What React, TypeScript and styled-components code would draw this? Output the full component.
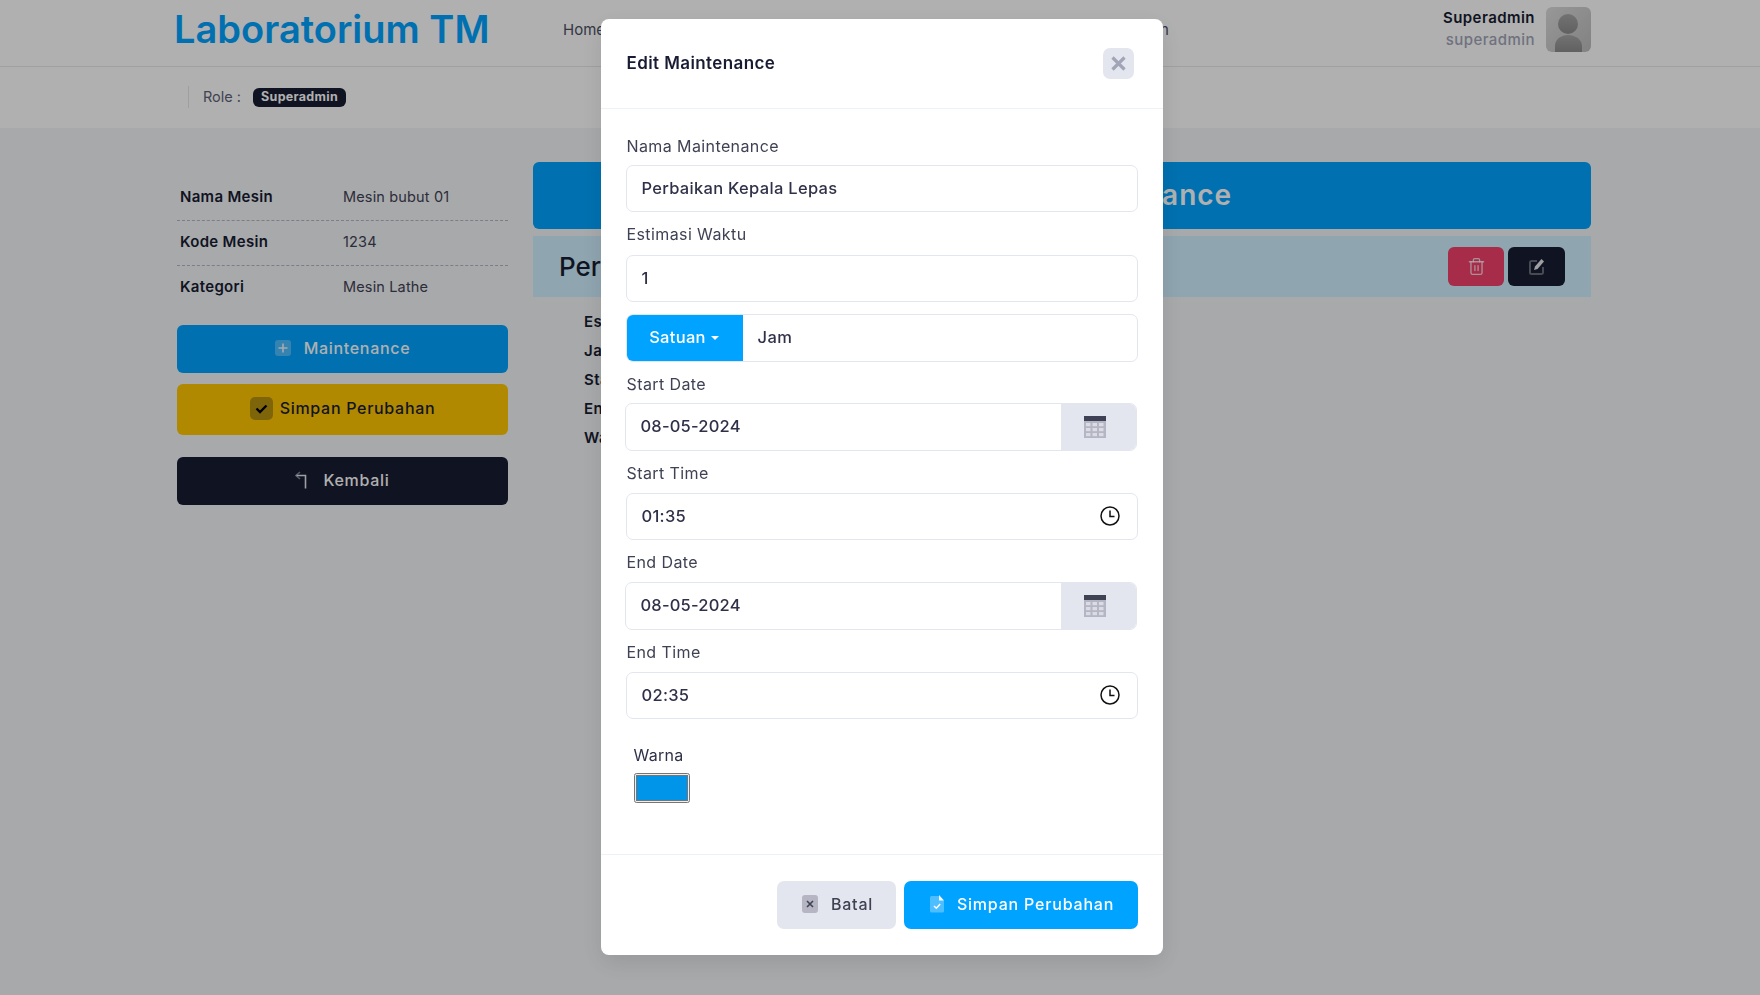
import styled, { createGlobalStyle } from "styled-components";
import { Trash2 } from "lucide-react";

const GlobalStyle = createGlobalStyle`
  * { box-sizing: border-box; }
  html, body { margin: 0; padding: 0; height: 100%; }
  body {
    background: #f3f5f8;
    font-family: "Inter", "Noto Sans", sans-serif;
    color: #181c32;
    overflow: hidden;
  }
`;

const Page = styled.div`
  height: 995px;
`;

const Header = styled.header`
  height: 67px;
  background: #fff;
  border-bottom: 1px solid #e8e8e8;
  display: flex;
  align-items: center;
  padding: 0 169px 7px 174px;
`;

const Logo = styled.h1`
  margin: 0;
  width: 389px;
  padding-bottom: 2px;
  font-size: 38px;
  font-weight: 600;
  color: #00a3ff;
`;

const Nav = styled.nav`
  width: 606px;
  display: flex;
  justify-content: space-between;
  font-size: 15px;
  color: #4b5066;
`;

const UserBox = styled.div`
  margin-left: auto;
  display: flex;
  align-items: center;
  gap: 11px;
`;

const UserText = styled.div`
  text-align: right;
  font-size: 15px;
  line-height: 22px;
  font-weight: 600;
  letter-spacing: 0.45px;
  padding-bottom: 2px;
`;

const UserSub = styled.div`
  font-weight: 500;
  color: #a1a5b7;
`;

const Avatar = styled.div`
  width: 45px;
  height: 45px;
  border-radius: 6px;
  overflow: hidden;
  svg { display: block; }
`;

const SubHeader = styled.div`
  height: 61px;
  background: #fff;
  display: flex;
  align-items: center;
  padding: 0 0 1px 188px;
`;

const RoleBox = styled.div`
  height: 22px;
  border-left: 1px solid #e4e6ef;
  padding-left: 14px;
  display: flex;
  align-items: center;
  gap: 12px;
  font-size: 14.5px;
  color: #5e6278;
`;

const RoleText = styled.span`
  padding-bottom: 2px;
`;

const Badge = styled.span`
  width: 93px;
  height: 19px;
  border-radius: 6px;
  background: #181c32;
  color: #fff;
  font-size: 12.5px;
  font-weight: 700;
  letter-spacing: 0.3px;
  padding-bottom: 1px;
  display: flex;
  align-items: center;
  justify-content: center;
`;

const Content = styled.main`
  display: flex;
  gap: 25px;
  padding: 34px 169px 0 177px;
`;

const LeftCol = styled.aside`
  width: 331px;
  padding-top: 14px;
`;

const InfoRow = styled.div<{ $last?: boolean }>`
  height: 45px;
  display: flex;
  align-items: center;
  padding: 0 0 ${(p) => (p.$last ? 4 : 3)}px 3px;
  font-size: 15px;
  border-bottom: ${(p) => (p.$last ? "none" : "1px dashed #b5b5c3")};
`;

const InfoLabel = styled.span`
  width: 163px;
  font-weight: 600;
  letter-spacing: 0.3px;
`;

const InfoValue = styled.span`
  font-size: 14.5px;
  letter-spacing: 0.15px;
  color: #3f4254;
`;

const SideButton = styled.button<{ $bg: string; $fg: string; $h: number; $mt: number; $gap: number }>`
  width: 100%;
  height: ${(p) => p.$h}px;
  margin-top: ${(p) => p.$mt}px;
  border: 0;
  border-radius: 6px;
  background: ${(p) => p.$bg};
  color: ${(p) => p.$fg};
  font-family: inherit;
  font-size: 16px;
  font-weight: 500;
  letter-spacing: 0.7px;
  padding: 0 0 3px;
  display: flex;
  align-items: center;
  justify-content: center;
  gap: ${(p) => p.$gap}px;
`;

const RightCol = styled.section`
  flex: 1;
`;

const Banner = styled.div`
  height: 67px;
  border-radius: 6px;
  background: #00a3ff;
  color: #fff;
  font-size: 28px;
  font-weight: 600;
  letter-spacing: 1px;
  display: flex;
  align-items: center;
  justify-content: center;
  padding: 0 0 2px 62px;
`;

const PlanBar = styled.div`
  height: 61px;
  margin-top: 7px;
  background: #cfeffe;
  display: flex;
  align-items: center;
  padding: 0 26px;
  font-size: 26px;
  font-weight: 500;
`;

const PlanActions = styled.div`
  margin-left: auto;
  display: flex;
  gap: 4px;
`;

const SquareButton = styled.button<{ $bg: string; $w: number }>`
  width: ${(p) => p.$w}px;
  height: 39px;
  border: 0;
  border-radius: 6px;
  background: ${(p) => p.$bg};
  display: flex;
  align-items: center;
  justify-content: center;
  padding: 0;
  color: rgba(255, 255, 255, 0.75);
`;

const DetailList = styled.div`
  padding: 10px 0 0 51px;
  font-size: 15px;
  font-weight: 600;
  letter-spacing: 0.5px;
  line-height: 29px;
`;

const Backdrop = styled.div`
  position: fixed;
  inset: 0;
  background: rgba(0, 0, 0, 0.31);
`;

const ModalWrap = styled.div`
  position: fixed;
  inset: 0;
  padding: 19px 0 0 3px;
  display: flex;
  justify-content: center;
  align-items: flex-start;
`;

const Modal = styled.div`
  width: 562px;
  height: 936px;
  background: #fff;
  border-radius: 8px;
  box-shadow: 0 8px 24px rgba(0, 0, 0, 0.1);
  display: flex;
  flex-direction: column;
`;

const ModalHead = styled.div`
  height: 90px;
  flex: none;
  border-bottom: 1px solid #eff2f5;
  display: flex;
  align-items: center;
  justify-content: space-between;
  padding: 0 29px 0 26px;
`;

const ModalTitle = styled.h2`
  margin: 0;
  padding-bottom: 2px;
  font-size: 17px;
  font-weight: 600;
  letter-spacing: 0.4px;
  color: #181c32;
`;

const CloseButton = styled.button`
  width: 31px;
  height: 31px;
  border: 0;
  border-radius: 7px;
  background: #e4e6ef;
  padding: 0;
  display: flex;
  align-items: center;
  justify-content: center;
`;

const ModalBody = styled.div`
  flex: 1;
  padding: 24px 25px 0;
`;

const FieldLabel = styled.div<{ $h: number; $pt: number }>`
  height: ${(p) => p.$h}px;
  padding: ${(p) => p.$pt}px 0 0 1px;
  font-size: 16px;
  letter-spacing: 0.4px;
  line-height: 26px;
  color: #3f4254;
`;

const Field = styled.div`
  height: 47px;
  width: 512px;
  border: 1px solid #e4e6ef;
  border-radius: 7px;
  background: #fff;
  display: flex;
  align-items: center;
  justify-content: space-between;
  padding: 0 17px 2px 15px;
  font-size: 16.5px;
  font-weight: 500;
  letter-spacing: 0.3px;
  color: #2f3148;
  svg { margin-top: 1px; }
`;

const UnitRow = styled.div`
  height: 48px;
  width: 512px;
  margin: 12px 0 9px;
  display: flex;
  border: 1px solid #e4e6ef;
  border-radius: 7px;
  overflow: hidden;
`;

const UnitButton = styled.div`
  width: 117px;
  margin: -1px 0 -1px -1px;
  padding-bottom: 2px;
  background: #00a3ff;
  color: #fff;
  font-size: 16.5px;
  font-weight: 500;
  letter-spacing: 0.3px;
  display: flex;
  align-items: center;
  justify-content: center;
  gap: 5px;
`;

const Caret = styled.span`
  width: 0;
  height: 0;
  margin-top: 1px;
  border-left: 4px solid transparent;
  border-right: 4px solid transparent;
  border-top: 4px solid #fff;
`;

const UnitValue = styled.div`
  padding: 0 0 2px 15px;
  font-size: 16.5px;
  font-weight: 500;
  letter-spacing: 0.4px;
  color: #2f3148;
  display: flex;
  align-items: center;
`;

const DateRow = styled.div`
  height: 48px;
  width: 512px;
  margin: 0 0 9px -1px;
  border: 1px solid #e4e6ef;
  border-radius: 7px;
  overflow: hidden;
  display: flex;
`;

const DateValue = styled.div`
  flex: 1;
  padding: 0 0 3px 15px;
  display: flex;
  align-items: center;
  font-size: 16.5px;
  font-weight: 500;
  letter-spacing: 0.2px;
  color: #2f3148;
`;

const DateAddon = styled.div`
  width: 75px;
  padding-right: 7px;
  background: #e4e6ef;
  display: flex;
  align-items: center;
  justify-content: center;
`;

const ColorBlock = styled.div`
  padding: 23px 0 0 8px;
`;

const ColorLabel = styled.div`
  height: 31px;
  font-size: 16px;
  letter-spacing: 0.3px;
  line-height: 26px;
  color: #2f3148;
`;

const ColorInput = styled.input`
  display: block;
  width: 56px;
  height: 30px;
  margin: 0;
  padding: 1px;
  &::-webkit-color-swatch-wrapper { padding: 0; }
  &::-webkit-color-swatch { border: 1px solid #767676; }
`;

const ModalFoot = styled.div`
  height: 101px;
  flex: none;
  border-top: 1px solid #eff2f5;
  display: flex;
  justify-content: flex-end;
  gap: 8px;
  padding: 26px 25px 0 0;
`;

const FootButton = styled.button<{ $bg: string; $fg: string; $w: number }>`
  width: ${(p) => p.$w}px;
  height: 48px;
  border: 0;
  border-radius: 7px;
  background: ${(p) => p.$bg};
  color: ${(p) => p.$fg};
  font-family: inherit;
  font-size: 16px;
  font-weight: 500;
  letter-spacing: 0.8px;
  padding: 0 0 2px 3px;
  display: flex;
  align-items: center;
  justify-content: center;
  gap: 13px;
`;

const CalendarIcon = () => (
  <svg width="22" height="22" viewBox="0 0 22 22">
    <rect x="0" y="0" width="22" height="5" fill="#3f4254" />
    <rect x="0" y="5" width="22" height="17" fill="#b5b5c3" />
    {[0, 1, 2].map((r) =>
      [0, 1, 2].map((c) => (
        <rect key={`${r}-${c}`} x={2 + c * 6.5} y={7 + r * 5} width="4.5" height="3.2" fill="#d9dbe5" />
      ))
    )}
  </svg>
);

const ClockIcon = () => (
  <svg width="20" height="20" viewBox="0 0 20 20" fill="none" stroke="#111" strokeWidth="1.5">
    <circle cx="10" cy="10" r="9" />
    <path d="M10 4.5V10.5H14.5" />
  </svg>
);

const PersonIcon = () => (
  <svg width="45" height="45" viewBox="0 0 45 45">
    <defs>
      <linearGradient id="avatarBg" x1="0" y1="0" x2="1" y2="1">
        <stop offset="0" stopColor="#dcdcdc" />
        <stop offset="1" stopColor="#bcbcbc" />
      </linearGradient>
      <linearGradient id="avatarFg" x1="0" y1="0" x2="0" y2="1">
        <stop offset="0" stopColor="#a6a6a6" />
        <stop offset="1" stopColor="#8c8c8c" />
      </linearGradient>
    </defs>
    <rect width="45" height="45" fill="url(#avatarBg)" />
    <circle cx="22" cy="17" r="10" fill="url(#avatarFg)" />
    <path d="M9 45V39C9 33 14 28 22 28C30 28 36 33 36 39V45Z" fill="url(#avatarFg)" />
  </svg>
);

const PlusIcon = () => (
  <svg width="16" height="16" viewBox="0 0 16 16">
    <rect width="16" height="16" rx="3" fill="#fff" opacity="0.3" />
    <path d="M8 3.5V12.5M3.5 8H12.5" stroke="#fff" strokeWidth="1.6" opacity="0.9" />
  </svg>
);

const CheckIcon = () => (
  <svg width="23" height="23" viewBox="0 0 23 23">
    <rect width="23" height="23" rx="5" fill="#181c32" opacity="0.3" />
    <path d="M6.5 11.5L10 15L16.5 8.5" fill="none" stroke="#000" strokeWidth="2.4" />
  </svg>
);

const BackIcon = () => (
  <svg width="12" height="18" viewBox="0 0 12 18" fill="none">
    <path d="M5 1L1 4.5L5 8" stroke="#7e8299" strokeWidth="1.6" />
    <path d="M1.5 4.5H10.5V17.5" stroke="#e4e6ef" strokeWidth="1.6" />
  </svg>
);

const PenIcon = () => (
  <svg width="16" height="17" viewBox="0 0 16 17" fill="none">
    <path d="M8 3H2.5A1.5 1.5 0 0 0 1 4.5V14.5A1.5 1.5 0 0 0 2.5 16H12.5A1.5 1.5 0 0 0 14 14.5V9" stroke="#fff" strokeOpacity="0.35" strokeWidth="2" />
    <path d="M5 12L6 8.5L12.5 1L15 3.5L8.5 11Z" fill="#fff" fillOpacity="0.9" />
  </svg>
);

const CloseX = () => (
  <svg width="17" height="17" viewBox="0 0 17 17">
    <path d="M2.5 2.5L14.5 14.5M14.5 2.5L2.5 14.5" stroke="#a1a5b7" strokeWidth="3.2" />
  </svg>
);

const SmallX = () => (
  <svg width="16" height="18" viewBox="0 0 16 18">
    <rect width="16" height="18" rx="3" fill="#b5b5c3" />
    <path d="M5 6L11 12M11 6L5 12" stroke="#3f4254" strokeWidth="1.6" />
  </svg>
);

const DocIcon = () => (
  <svg width="14" height="18" viewBox="0 0 14 18">
    <path d="M2 1H9L14 6V16A1.5 1.5 0 0 1 12.5 17.5H1.5A1.5 1.5 0 0 1 0 16V2.5A1.5 1.5 0 0 1 1.5 1Z" fill="#fff" opacity="0.3" />
    <path d="M9 0L14 5.5H9Z" fill="#fff" />
    <path d="M4 11L6.3 13.2L10.2 9" fill="none" stroke="#fff" strokeWidth="1.5" />
  </svg>
);

const App = () => {
  return (
    <>
      <GlobalStyle />
      <Page>
        <Header>
          <Logo>Laboratorium TM</Logo>
          <Nav>
            <span>Home</span>
            <span>Mesin</span>
            <span>Jadwal</span>
            <span>Admin</span>
          </Nav>
          <UserBox>
            <UserText>
              Superadmin
              <UserSub>superadmin</UserSub>
            </UserText>
            <Avatar>
              <PersonIcon />
            </Avatar>
          </UserBox>
        </Header>
        <SubHeader>
          <RoleBox>
            <RoleText>Role :</RoleText>
            <Badge>Superadmin</Badge>
          </RoleBox>
        </SubHeader>
        <Content>
          <LeftCol>
            <InfoRow>
              <InfoLabel>Nama Mesin</InfoLabel>
              <InfoValue>Mesin bubut 01</InfoValue>
            </InfoRow>
            <InfoRow>
              <InfoLabel>Kode Mesin</InfoLabel>
              <InfoValue>1234</InfoValue>
            </InfoRow>
            <InfoRow $last>
              <InfoLabel>Kategori</InfoLabel>
              <InfoValue>Mesin Lathe</InfoValue>
            </InfoRow>
            <SideButton $bg="#00a3ff" $fg="#fff" $h={48} $mt={14} $gap={13}>
              <PlusIcon />
              Maintenance
            </SideButton>
            <SideButton $bg="#ffc700" $fg="#181c32" $h={51} $mt={11} $gap={7}>
              <CheckIcon />
              Simpan Perubahan
            </SideButton>
            <SideButton $bg="#181c32" $fg="#fff" $h={48} $mt={22} $gap={16}>
              <BackIcon />
              Kembali
            </SideButton>
          </LeftCol>
          <RightCol>
            <Banner>Detail Maintenance</Banner>
            <PlanBar>
              Perbaikan Kepala Lepas
              <PlanActions>
                <SquareButton $bg="#f1416c" $w={56}>
                  <Trash2 size={19} strokeWidth={1.7} />
                </SquareButton>
                <SquareButton $bg="#181c32" $w={57}>
                  <PenIcon />
                </SquareButton>
              </PlanActions>
            </PlanBar>
            <DetailList>
              <div>Estimasi</div>
              <div>Jam</div>
              <div>Start</div>
              <div>End</div>
              <div>Warna</div>
            </DetailList>
          </RightCol>
        </Content>
      </Page>
      <Backdrop />
      <ModalWrap>
        <Modal>
          <ModalHead>
            <ModalTitle>Edit Maintenance</ModalTitle>
            <CloseButton>
              <CloseX />
            </CloseButton>
          </ModalHead>
          <ModalBody>
            <FieldLabel $h={32} $pt={0}>Nama Maintenance</FieldLabel>
            <Field>Perbaikan Kepala Lepas</Field>
            <FieldLabel $h={43} $pt={9}>Estimasi Waktu</FieldLabel>
            <Field>1</Field>
            <UnitRow>
              <UnitButton>
                Satuan
                <Caret />
              </UnitButton>
              <UnitValue>Jam</UnitValue>
            </UnitRow>
            <FieldLabel $h={32} $pt={0}>Start Date</FieldLabel>
            <DateRow>
              <DateValue>08-05-2024</DateValue>
              <DateAddon>
                <CalendarIcon />
              </DateAddon>
            </DateRow>
            <FieldLabel $h={33} $pt={0}>Start Time</FieldLabel>
            <Field>
              01:35
              <ClockIcon />
            </Field>
            <FieldLabel $h={42} $pt={9}>End Date</FieldLabel>
            <DateRow>
              <DateValue>08-05-2024</DateValue>
              <DateAddon>
                <CalendarIcon />
              </DateAddon>
            </DateRow>
            <FieldLabel $h={33} $pt={0}>End Time</FieldLabel>
            <Field>
              02:35
              <ClockIcon />
            </Field>
            <ColorBlock>
              <ColorLabel>Warna</ColorLabel>
              <ColorInput type="color" defaultValue="#0095e8" />
            </ColorBlock>
          </ModalBody>
          <ModalFoot>
            <FootButton $bg="#e4e6ef" $fg="#3f4254" $w={119}>
              <SmallX />
              Batal
            </FootButton>
            <FootButton $bg="#00a3ff" $fg="#fff" $w={234}>
              <DocIcon />
              Simpan Perubahan
            </FootButton>
          </ModalFoot>
        </Modal>
      </ModalWrap>
    </>
  );
};

export default App;
